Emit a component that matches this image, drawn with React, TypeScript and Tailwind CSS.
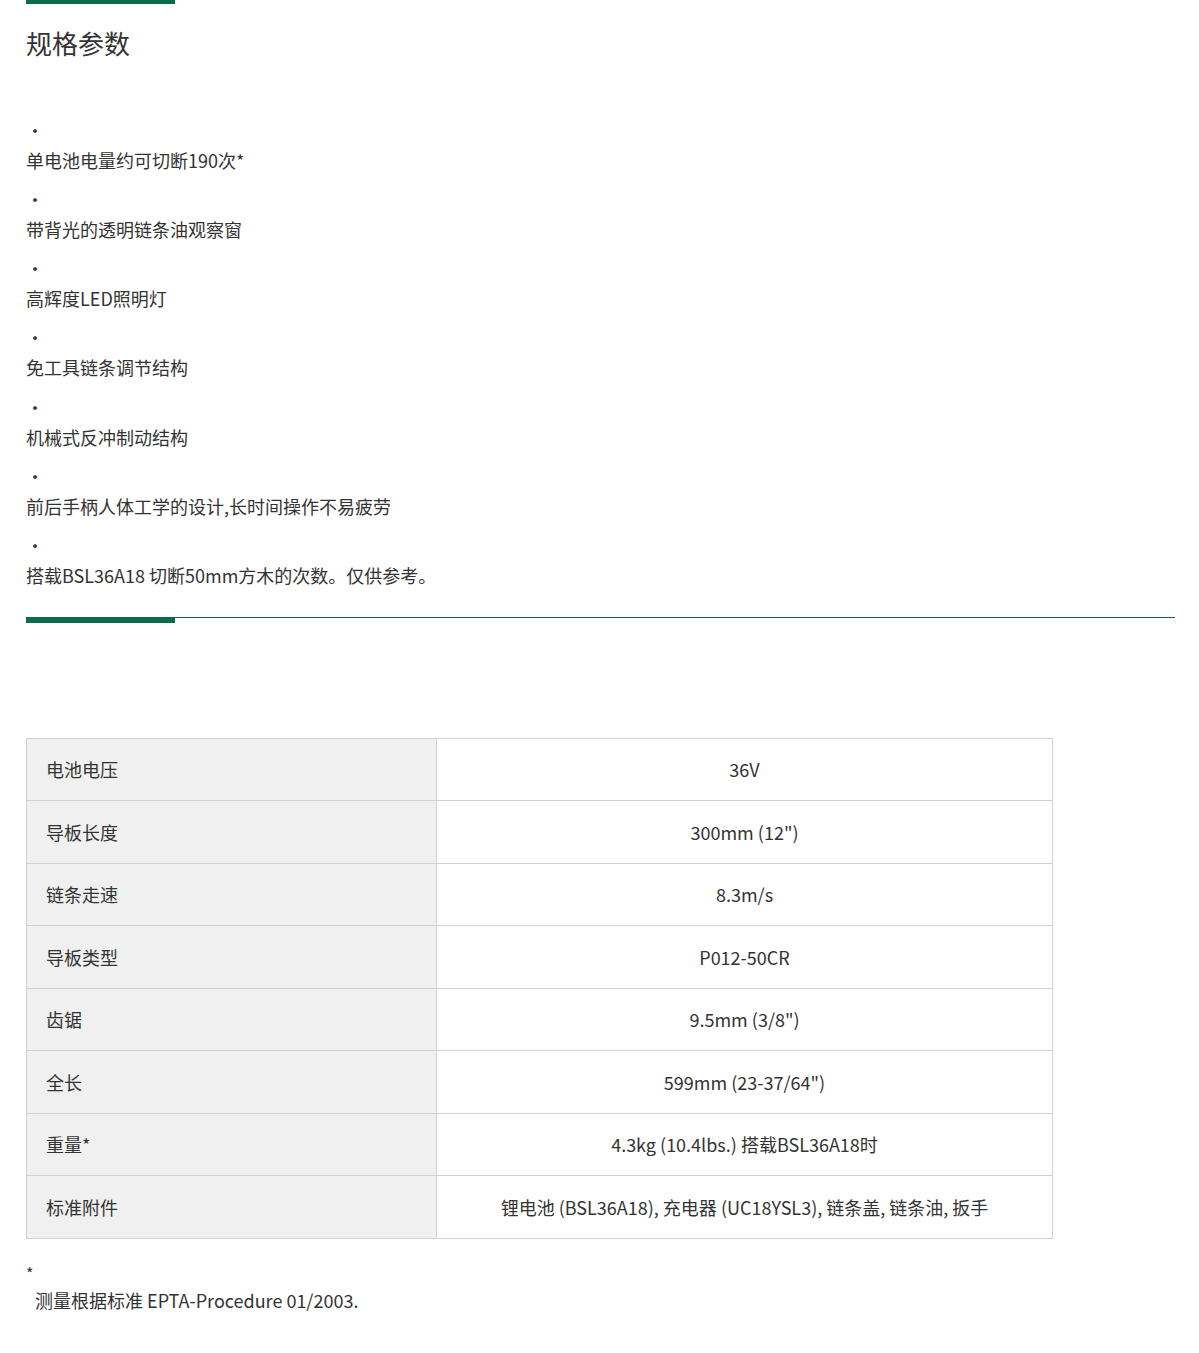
import React from "react";

const bullets = [
  "单电池电量约可切断190次*",
  "带背光的透明链条油观察窗",
  "高辉度LED照明灯",
  "免工具链条调节结构",
  "机械式反冲制动结构",
  "前后手柄人体工学的设计,长时间操作不易疲劳",
  "搭载BSL36A18 切断50mm方木的次数。仅供参考。",
];

const rows: [string, string][] = [
  ["电池电压", "36V"],
  ["导板长度", "300mm (12\")"],
  ["链条走速", "8.3m/s"],
  ["导板类型", "P012-50CR"],
  ["齿锯", "9.5mm (3/8\")"],
  ["全长", "599mm (23-37/64\")"],
  ["重量*", "4.3kg (10.4lbs.) 搭载BSL36A18时"],
  ["标准附件", "锂电池 (BSL36A18), 充电器 (UC18YSL3), 链条盖, 链条油, 扳手"],
];

export default function App() {
  return (
    <div
      className="bg-white text-[#333] px-[26px] pb-10"
      style={{ fontFamily: '"Noto Sans CJK SC", "Noto Sans", sans-serif' }}
    >
      <div className="w-[149px] h-1 bg-[#0b6b4c]" />
      <h2 className="mt-[21px] text-[26px] leading-[36px] font-normal text-[#333]">规格参数</h2>
      <ul className="mt-[54px]">
        {bullets.map((b, i) => (
          <li key={i} className={i > 0 ? "mt-[9.15px]" : ""}>
            <div className="h-[30px] leading-[30px] text-[18px]">·</div>
            <div className="h-[30px] leading-[30px] text-[18px]">{b}</div>
          </li>
        ))}
      </ul>
      <div className="mt-[27px] flex items-start w-[1149px]">
        <div className="w-[149px] h-[6px] bg-[#0b6b4c]" />
        <div className="flex-1 h-px bg-[#1d5e54]" />
      </div>
      <table className="mt-[115px] w-[1027px] border-collapse text-[18px]">
        <tbody>
          {rows.map(([k, v], i) => (
            <tr key={i} className="h-[62.5px]">
              <td className="w-[410px] bg-[#f0f0f0] border border-[#d2d2d2] pl-[19px]">{k}</td>
              <td className="border border-[#d2d2d2] text-center">{v}</td>
            </tr>
          ))}
        </tbody>
      </table>
      <div className="mt-[22px] text-[16px] leading-[24px]">*</div>
      <div className="mt-0 text-[18px] leading-[30px] pl-[9px]">测量根据标准 EPTA-Procedure 01/2003.</div>
    </div>
  );
}
